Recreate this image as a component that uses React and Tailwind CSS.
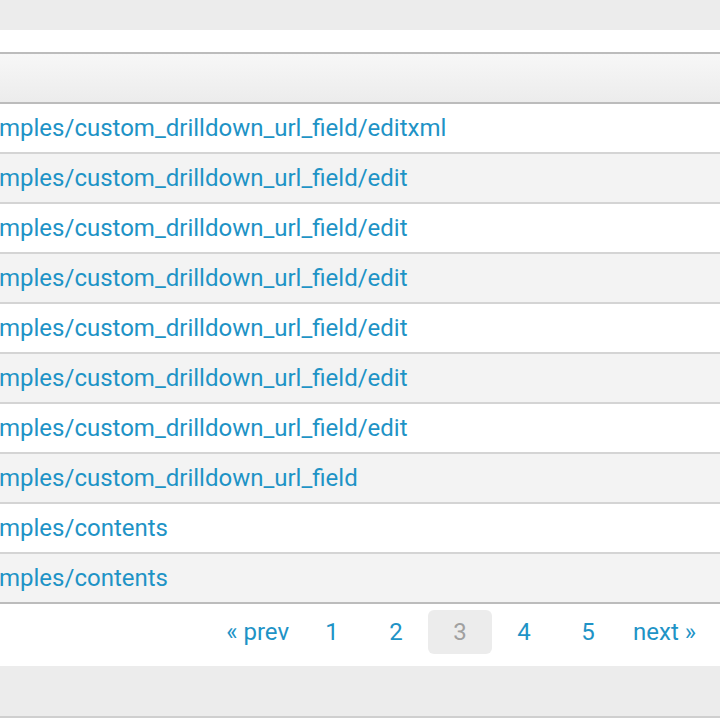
const rows = [
  "mples/custom_drilldown_url_field/editxml",
  "mples/custom_drilldown_url_field/edit",
  "mples/custom_drilldown_url_field/edit",
  "mples/custom_drilldown_url_field/edit",
  "mples/custom_drilldown_url_field/edit",
  "mples/custom_drilldown_url_field/edit",
  "mples/custom_drilldown_url_field/edit",
  "mples/custom_drilldown_url_field",
  "mples/contents",
  "mples/contents",
]

const pages = ["1", "2", "3", "4", "5"]

export default function App() {
  return (
    <div className="w-[720px] h-[720px] overflow-hidden bg-white" style={{ fontFamily: "Roboto, 'Liberation Sans', sans-serif" }}>
      <div className="h-[30px] bg-[#ececec]" />
      <div className="h-[22px] bg-white" />

      <div className="h-[52px] border-y-2 border-[#bcbcbc] bg-gradient-to-b from-[#f7f7f7] to-[#ececec]" />

      {rows.map((r, i) => (
        <div
          key={i}
          className={
            "h-[50px] flex items-center border-b-2 " +
            (i % 2 === 1 ? "bg-[#f3f3f3] " : "bg-white ") +
            (i === rows.length - 1 ? "border-[#bcbcbc]" : "border-[#d4d4d4]")
          }
        >
          <a href="#" className="text-[24px] leading-none text-[#1e93c6] whitespace-nowrap -ml-px">
            {r}
          </a>
        </div>
      ))}

      <div className="h-[62px] flex items-start pt-[6px] justify-end pr-[11px]">
        <a href="#" className="text-[24px] text-[#1e93c6] px-[11px] h-[44px] flex items-center">« prev</a>
        {pages.map((p) => (
          <a
            key={p}
            href="#"
            className={
              "w-[64px] h-[44px] flex items-center justify-center rounded-md text-[24px] " +
              (p === "3" ? "bg-[#ececec] text-[#a0a0a0]" : "text-[#1e93c6]")
            }
          >
            {p}
          </a>
        ))}
        <a href="#" className="text-[24px] text-[#1e93c6] px-[13px] h-[44px] flex items-center">next »</a>
      </div>

      <div className="h-[52px] bg-[#ececec] border-b-2 border-[#cfcfcf]" />
    </div>
  )
}
